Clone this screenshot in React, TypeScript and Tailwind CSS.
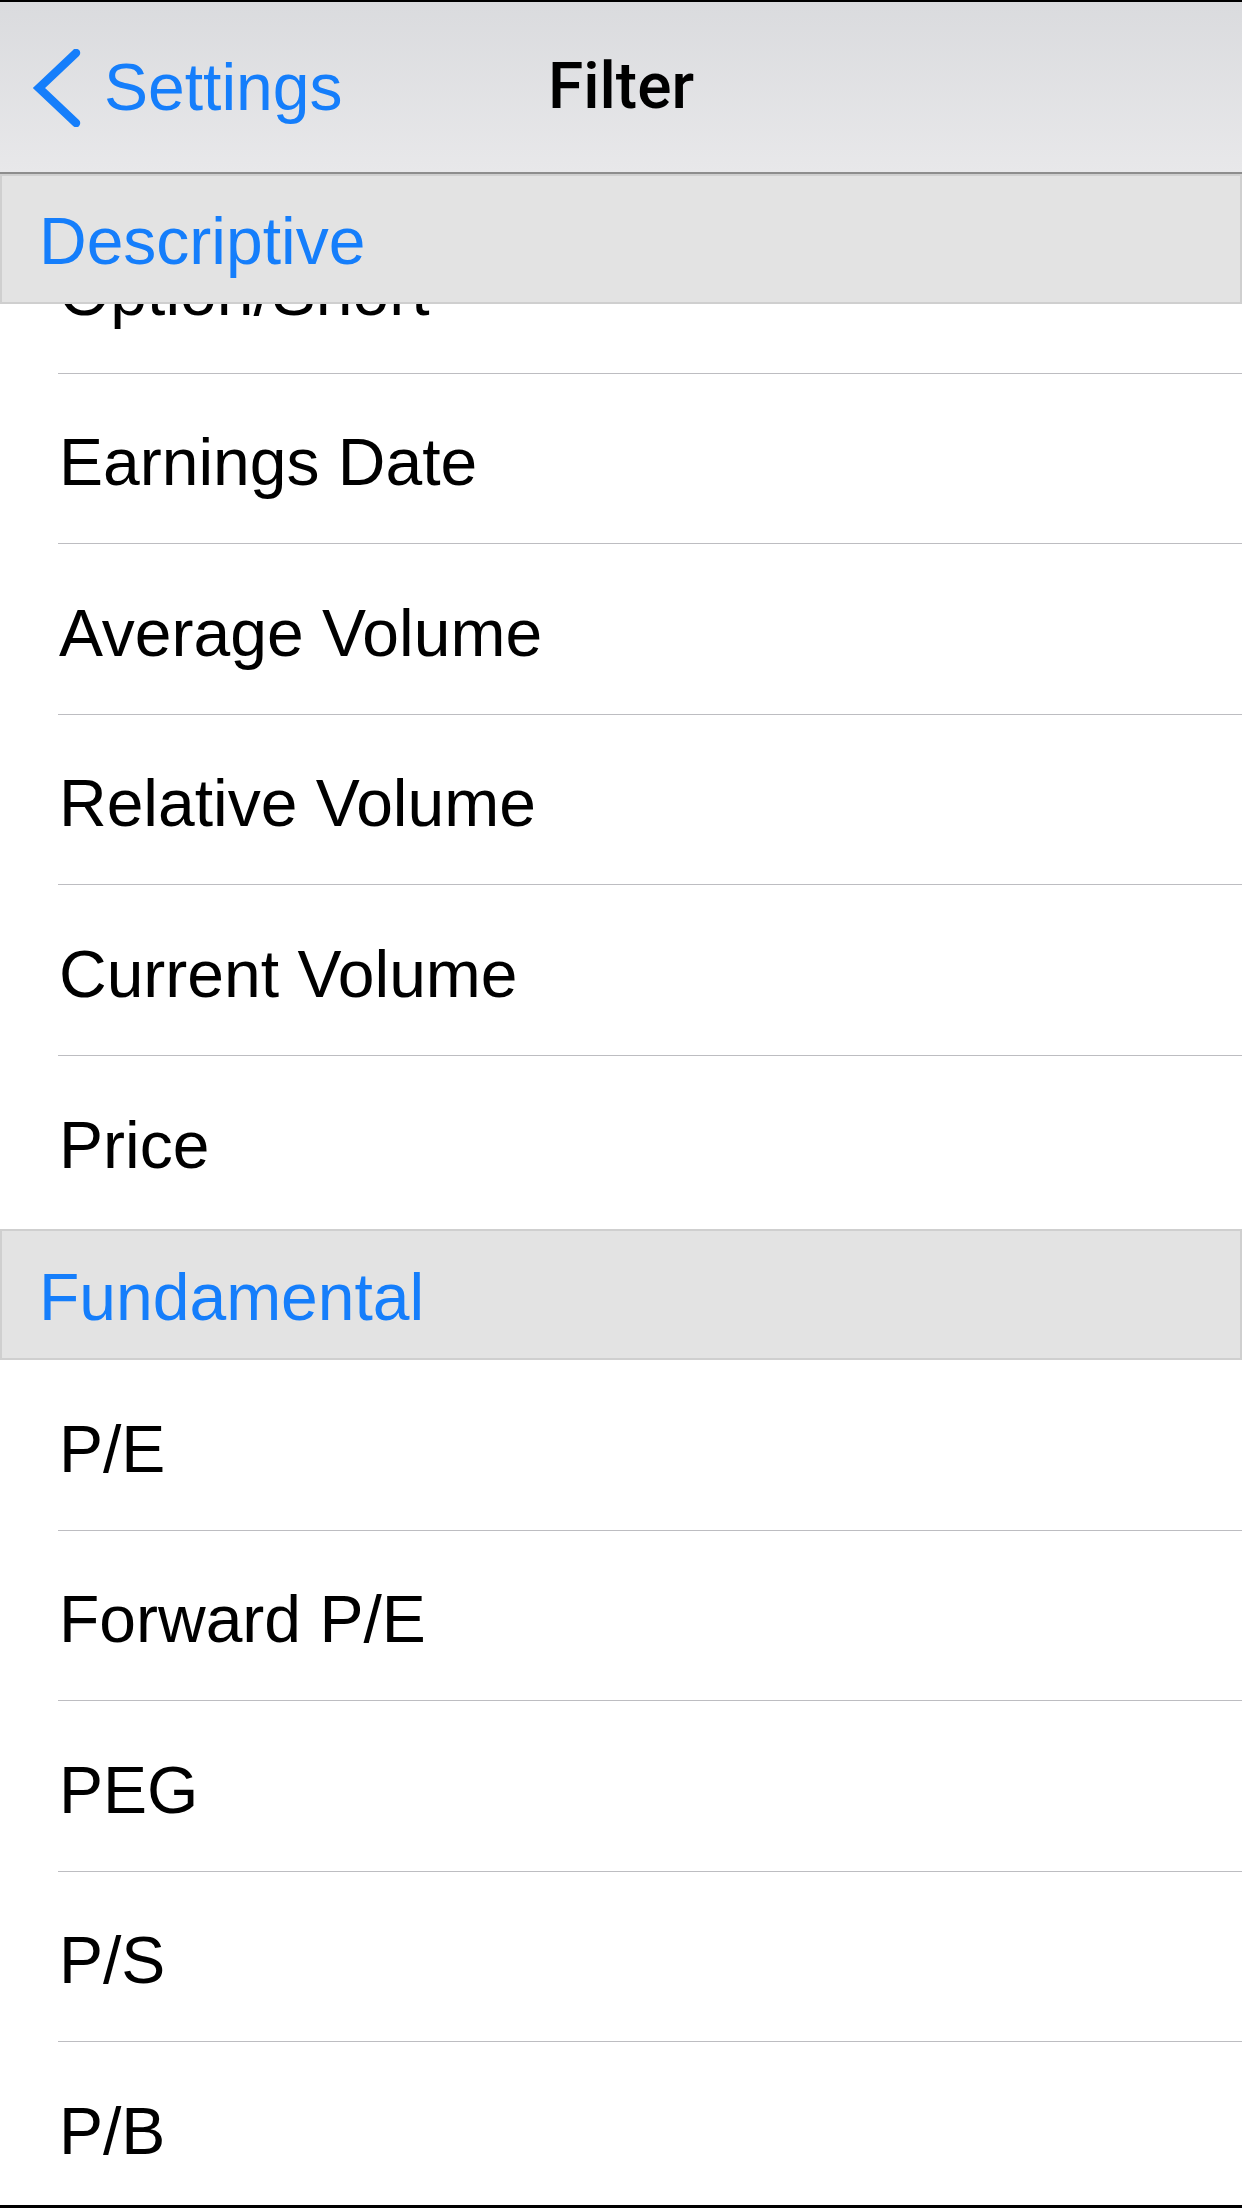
const font = { fontFamily: '"Liberation Sans", Arial, sans-serif' };

const descriptive = [
  'Option/Short',
  'Earnings Date',
  'Average Volume',
  'Relative Volume',
  'Current Volume',
  'Price',
];

const fundamental = ['P/E', 'Forward P/E', 'PEG', 'P/S', 'P/B'];

const Row = ({ label, last }: { label: string; last?: boolean }) => (
  <div className="h-[170.5px] flex flex-col shrink-0">
    <div className="flex-1 flex items-center pl-[59px] pt-[8px] text-[66px] text-black leading-none">
      {label}
    </div>
    {!last && <div className="ml-[58px] h-px bg-[#bdbdc1]" />}
  </div>
);

const SectionHeader = ({ title, h }: { title: string; h: string }) => (
  <div
    className={`${h} shrink-0 flex items-center pl-[37px] pt-[4px] bg-[#e3e3e3] border-2 border-[#cfcfcf] text-[66px] text-[#157efb] leading-none relative z-10`}
  >
    {title}
  </div>
);

export default function App() {
  return (
    <div
      className="w-[1242px] h-[2208px] bg-white overflow-hidden flex flex-col border-t-2 border-b-[3px] border-black"
      style={font}
    >
      {/* nav bar */}
      <div className="h-[172px] shrink-0 relative flex items-center bg-gradient-to-b from-[#dadbde] to-[#e8e8ea] border-b-2 border-[#8d8d8d]">
        <div className="flex items-center pl-[30px] text-[#157efb]">
          <svg width="52" height="78" viewBox="0 0 52 78" className="mt-[2px]">
            <path
              d="M46 4 L9 39 L46 74"
              fill="none"
              stroke="#157efb"
              strokeWidth="8.5"
              strokeLinecap="round"
              strokeLinejoin="miter"
            />
          </svg>
          <span className="ml-[22px] text-[66px] leading-none">Settings</span>
        </div>
        <div className="absolute left-0 right-0 text-center text-[64px] font-medium text-black leading-none pointer-events-none font-['Roboto',sans-serif]">
          Filter
        </div>
      </div>

      <SectionHeader title="Descriptive" h="h-[130px]" />
      <div className="h-[925px] shrink-0 overflow-hidden flex flex-col">
        <div className="-mt-[101px] flex flex-col">
          {descriptive.map((d, i) => (
            <Row key={d} label={d} last={i === descriptive.length - 1} />
          ))}
        </div>
      </div>

      <SectionHeader title="Fundamental" h="h-[131px]" />
      <div className="flex-1 flex flex-col overflow-hidden">
        {fundamental.map((d, i) => (
          <Row key={d} label={d} last={i === fundamental.length - 1} />
        ))}
      </div>
    </div>
  );
}
